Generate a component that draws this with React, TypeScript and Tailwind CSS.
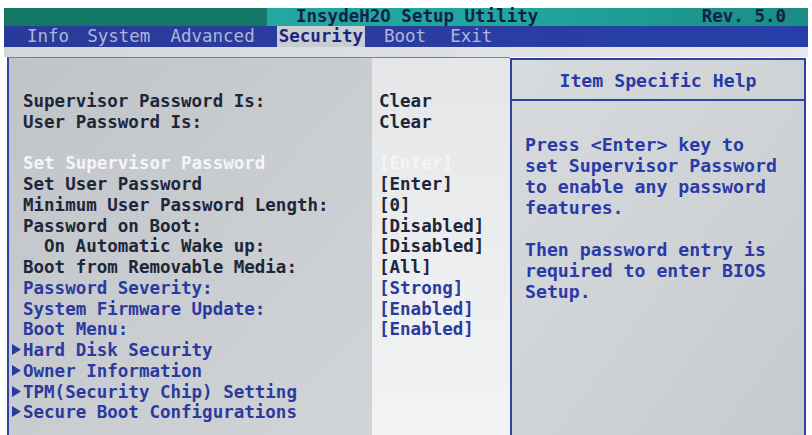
const MENU = [
  { label: "Info", ml: "ml-0" },
  { label: "System", ml: "ml-[18px]" },
  { label: "Advanced", ml: "ml-[20px]" },
  { label: "Security", ml: "ml-[22px]", active: true },
  { label: "Boot", ml: "ml-[19px]" },
  { label: "Exit", ml: "ml-[24px]" },
];

type Row = { label: string; value?: string; tone: "dark" | "hl" | "blue"; indent?: boolean; sub?: boolean };

const ROWS: (Row | null)[] = [
  { label: "Supervisor Password Is:", value: "Clear", tone: "dark" },
  { label: "User Password Is:", value: "Clear", tone: "dark" },
  null,
  { label: "Set Supervisor Password", value: "[Enter]", tone: "hl" },
  { label: "Set User Password", value: "[Enter]", tone: "dark" },
  { label: "Minimum User Password Length:", value: "[0]", tone: "dark" },
  { label: "Password on Boot:", value: "[Disabled]", tone: "dark" },
  { label: "On Automatic Wake up:", value: "[Disabled]", tone: "dark", indent: true },
  { label: "Boot from Removable Media:", value: "[All]", tone: "dark" },
  { label: "Password Severity:", value: "[Strong]", tone: "blue" },
  { label: "System Firmware Update:", value: "[Enabled]", tone: "blue" },
  { label: "Boot Menu:", value: "[Enabled]", tone: "blue" },
  { label: "Hard Disk Security", tone: "blue", sub: true },
  { label: "Owner Information", tone: "blue", sub: true },
  { label: "TPM(Security Chip) Setting", tone: "blue", sub: true },
  { label: "Secure Boot Configurations", tone: "blue", sub: true },
];

const HELP = [
  "Press <Enter> key to",
  "set Supervisor Password",
  "to enable any password",
  "features.",
  "",
  "Then password entry is",
  "required to enter BIOS",
  "Setup.",
];

const TONE = {
  dark: "text-[#20263a]",
  hl: "text-[#f4f5f7]",
  blue: "text-[#2a3a9e]",
};

const mono = { fontFamily: '"DejaVu Sans Mono", "Liberation Mono", monospace' };

export default function App() {
  return (
    <div className="h-[435px] w-[812px] overflow-hidden bg-white pl-[4px] pr-[4px] pt-[8px]" style={mono}>
      {/* Title bar */}
      <div className="flex h-[18px] items-center text-[17.5px] font-bold leading-none text-[#14204a]">
        <div className="h-full w-[263px] bg-[#157866]" />
        <div className="flex h-full flex-1 items-center bg-linear-to-r from-[#22a8a0] via-[#21a59d] to-[#198c84] pl-[29px] pr-[22px]">
          <span>InsydeH2O Setup Utility</span>
          <span className="ml-auto">Rev. 5.0</span>
        </div>
      </div>

      {/* Menu bar */}
      <div className="flex h-[21px] items-center bg-linear-to-r from-[#2a3a9a] via-[#2b3ca0] to-[#2440a8] pl-[23px] text-[17.5px] leading-none text-[#aeb6d8]">
        {MENU.map((m) =>
          m.active ? (
            <span key={m.label} className={`${m.ml} flex h-full items-center bg-[#c9cdd2] px-[2px] font-bold text-[#1c2682]`}>
              {m.label}
            </span>
          ) : (
            <span key={m.label} className={m.ml}>
              {m.label}
            </span>
          ),
        )}
      </div>

      {/* Body */}
      <div className="h-[10px] bg-linear-to-r from-[#d4d7da] to-[#e6e8ea]" />
      <div className="ml-[3px] mr-[2px] flex h-[400px]">
        {/* Left panel */}
        <div className="flex w-[503px] border-l-2 border-t border-l-[#2c44a6] border-t-[#7080b0]">
          <div className="w-[363px] bg-linear-to-br from-[#c0c4c8] to-[#d2d5d8] pl-[14px] pt-[33px] text-[17.5px] font-bold leading-[20.75px]">
            {ROWS.map((r, i) =>
              r ? (
                <div key={i} className={`h-[20.75px] whitespace-pre ${TONE[r.tone]} ${r.indent ? "pl-[21px]" : ""}`}>
                  {r.sub && (
                    <span className="-ml-[11px] inline-block w-[11px] align-middle">
                      <svg width="9" height="11" viewBox="0 0 9 11" className="mb-[3px]">
                        <path d="M0 0 L9 5.5 L0 11 Z" fill="#2a3a9e" />
                      </svg>
                    </span>
                  )}
                  {r.label}
                </div>
              ) : (
                <div key={i} className="h-[20.75px]" />
              ),
            )}
          </div>
          <div className="flex-1 bg-linear-to-b from-[#e4e6e8] to-[#f3f4f5] pl-[7px] pt-[33px] text-[17.5px] font-bold leading-[20.75px]">
            {ROWS.map((r, i) => (
              <div key={i} className={`h-[20.75px] whitespace-pre ${r ? TONE[r.tone] : ""}`}>
                {r?.value ?? ""}
              </div>
            ))}
          </div>
        </div>

        {/* Help panel */}
        <div className="mt-[1px] flex flex-1 flex-col border-2 border-[#2c44a8] bg-linear-to-br from-[#d8dbde] via-[#d0d3d6] to-[#c6cacd] text-[18.2px] font-bold text-[#2a3aa6]">
          <div className="flex h-[41px] items-center justify-center border-b-2 border-[#2c44a8] pt-[3px] leading-none">
            Item Specific Help
          </div>
          <div className="pl-[13px] pt-[33px] leading-[21px]">
            {HELP.map((l, i) => (
              <div key={i} className="h-[21px] whitespace-pre">
                {l}
              </div>
            ))}
          </div>
        </div>
      </div>
    </div>
  );
}
